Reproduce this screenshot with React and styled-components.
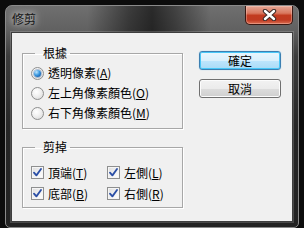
import React from 'react';
import styled, { createGlobalStyle } from 'styled-components';

const GlobalStyle = createGlobalStyle`
  * { box-sizing: border-box; }
  html, body {
    margin: 0;
    padding: 0;
    width: 304px;
    height: 228px;
    overflow: hidden;
    background: #0c0c0c;
    font-family: "Noto Sans CJK TC", "Noto Sans CJK SC", "Liberation Sans", sans-serif;
    font-size: 12px;
    color: #000;
  }
`;

const Window = styled.div`
  margin: 5px 0 0 5px;
  width: 294px;
  height: 223px;
  border: 1px solid #8a8a8a;
  border-radius: 7px 7px 5px 5px;
  padding: 0 5px 5px 5px;
  background:
    linear-gradient(180deg, #6f6f6f 0px, #616161 24px, #3c3c3c 50px, #262626 120px, #222 100%);
  display: flex;
  flex-direction: column;
`;

const TitleBar = styled.div`
  height: 26px;
  display: flex;
  align-items: flex-start;
  padding-left: 1px;
  margin: 0 -5px;
  padding: 0 5px 0 6px;
  background: linear-gradient(90deg,
    rgba(0,0,0,0) 28%,
    rgba(0,0,0,0.45) 42%,
    rgba(0,0,0,0.62) 50%,
    rgba(0,0,0,0.4) 58%,
    rgba(0,0,0,0) 70%);
`;

const Title = styled.span`
  margin-top: 5px;
  line-height: 16px;
  font-size: 12px;
  color: #151515;
  text-shadow: 0 0 6px rgba(255,255,255,0.75), 0 0 11px rgba(255,255,255,0.55);
`;

const CloseButton = styled.div`
  margin-left: auto;
  width: 48px;
  height: 19px;
  border: 1px solid #3a1711;
  border-top: none;
  border-radius: 0 0 5px 5px;
  background: linear-gradient(180deg, #e6a795 0%, #d9775f 40%, #c23a20 52%, #c03a22 78%, #dc6f52 100%);
  box-shadow: inset 0 0 0 1px rgba(255,220,210,0.35);
  display: flex;
  align-items: center;
  justify-content: center;
`;

const Client = styled.div`
  flex: 1;
  background: #f0f0f0;
  border: 1px solid #3e3e3e;
  box-shadow: 0 0 0 1px rgba(255,255,255,0.18);
  padding: 12px 0 0 10px;
  display: flex;
  gap: 16px;
`;

const LeftColumn = styled.div`
  width: 161px;
  display: flex;
  flex-direction: column;
  gap: 10px;
`;

const Group = styled.fieldset`
  margin: 0;
  min-width: 0;
  border: 1px solid #a7a7a7;
  box-shadow: inset 1px 1px 0 #fff, 1px 1px 0 #fff;
  padding: ${p => p.$pad};
`;

const Legend = styled.legend`
  margin-left: 4px;
  padding: 0 3px 0 8px;
  line-height: 16px;
  font-size: 12px;
`;

const Option = styled.label`
  display: flex;
  align-items: center;
  gap: 4px;
  height: ${p => p.$h}px;
  line-height: 16px;
  white-space: nowrap;
`;

const Mnemonic = styled.span`
  text-decoration: underline;
  text-underline-offset: 1px;
`;

const RadioMark = styled.span`
  width: 13px;
  height: 13px;
  flex: none;
  border-radius: 50%;
  border: 1px solid #8e8f8f;
  background: radial-gradient(circle at 40% 35%, #ffffff 0%, #f2f2f2 40%, #d4d4d4 100%);
  display: flex;
  align-items: center;
  justify-content: center;

  &::after {
    content: '';
    display: ${p => (p.$checked ? 'block' : 'none')};
    width: 7px;
    height: 7px;
    border-radius: 50%;
    background: radial-gradient(circle at 35% 30%, #bfe6ff 0%, #3d9ae0 45%, #0d56a8 85%, #0a3f80 100%);
    box-shadow: 0 0 0 1px rgba(40,90,150,0.35);
  }
`;

const CheckMark = styled.span`
  width: 13px;
  height: 13px;
  flex: none;
  border: 1px solid #8e8f8f;
  background: linear-gradient(135deg, #dcdcdc 0%, #f4f4f4 60%, #ffffff 100%);
  box-shadow: inset 0 0 0 1px #f5f5f5;
  display: flex;
  align-items: center;
  justify-content: center;
`;

const CheckGrid = styled.div`
  display: grid;
  grid-template-columns: 76px auto;
`;

const RightColumn = styled.div`
  padding-top: 6px;
  display: flex;
  flex-direction: column;
  gap: 9px;
`;

const Button = styled.button`
  width: 82px;
  height: 19px;
  padding: 0;
  font: inherit;
  font-size: 12px;
  line-height: 16px;
  color: #000;
  border-radius: 3px;
  border: 1px solid ${p => (p.$primary ? '#3c7fb1' : '#707070')};
  background: ${p => (p.$primary
    ? 'linear-gradient(180deg, #eaf6fd 0%, #d9f0fc 50%, #bee6fd 50%, #a9dbf6 100%)'
    : 'linear-gradient(180deg, #f2f2f2 0%, #ebebeb 50%, #dddddd 50%, #cfcfcf 100%)')};
  box-shadow: ${p => (p.$primary
    ? 'inset 0 0 0 1px #48c8f8, 0 0 1px #6fc0ef'
    : 'inset 0 0 0 1px #fcfcfc')};
`;

function Radio({ checked, children }) {
  return (
    <Option $h={20}>
      <RadioMark $checked={checked} />
      <span>{children}</span>
    </Option>
  );
}

function Check({ children }) {
  return (
    <Option $h={21}>
      <CheckMark>
        <svg width="9" height="9" viewBox="0 0 9 9">
          <path d="M1 4.6 L3.4 7.4 L8 1" fill="none" stroke="#2b4fa6" strokeWidth="1.8" strokeLinecap="round" strokeLinejoin="round" />
        </svg>
      </CheckMark>
      <span>{children}</span>
    </Option>
  );
}

export default function App() {
  return (
    <>
      <GlobalStyle />
      <Window>
        <TitleBar>
          <Title>修剪</Title>
          <CloseButton>
            <svg width="15" height="12" viewBox="0 0 15 12">
              <path d="M3 2 L12 10 M12 2 L3 10" stroke="#3d2a28" strokeWidth="4.4" strokeLinecap="round" />
              <path d="M3 2 L12 10 M12 2 L3 10" stroke="#ffffff" strokeWidth="2.4" strokeLinecap="round" />
            </svg>
          </CloseButton>
        </TitleBar>
        <Client>
          <LeftColumn>
            <Group $pad="2px 0 5px 8px">
              <Legend>根據</Legend>
              <Radio checked>透明像素(<Mnemonic>A</Mnemonic>)</Radio>
              <Radio>左上角像素顏色(<Mnemonic>O</Mnemonic>)</Radio>
              <Radio>右下角像素顏色(<Mnemonic>M</Mnemonic>)</Radio>
            </Group>
            <Group $pad="7px 0 3px 8px">
              <Legend>剪掉</Legend>
              <CheckGrid>
                <Check>頂端(<Mnemonic>T</Mnemonic>)</Check>
                <Check>左側(<Mnemonic>L</Mnemonic>)</Check>
                <Check>底部(<Mnemonic>B</Mnemonic>)</Check>
                <Check>右側(<Mnemonic>R</Mnemonic>)</Check>
              </CheckGrid>
            </Group>
          </LeftColumn>
          <RightColumn>
            <Button $primary>確定</Button>
            <Button>取消</Button>
          </RightColumn>
        </Client>
      </Window>
    </>
  );
}
